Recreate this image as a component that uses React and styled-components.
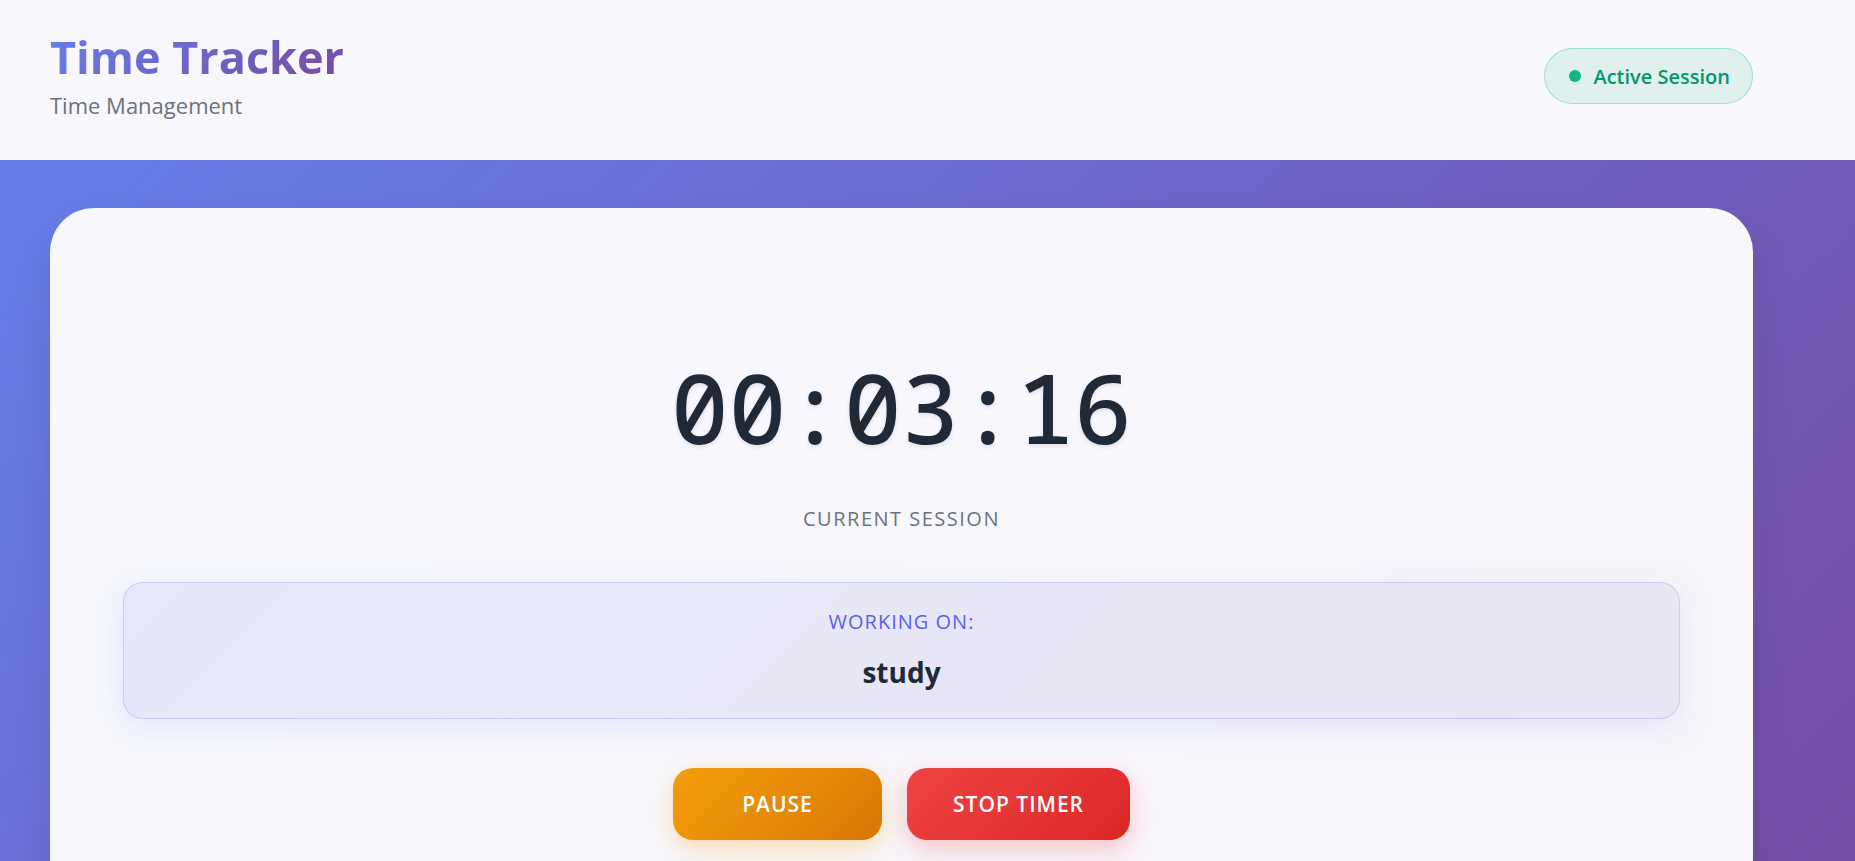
import React from "react";
import styled, { createGlobalStyle } from "styled-components";

const GlobalStyle = createGlobalStyle`
  * {
    box-sizing: border-box;
  }
  body {
    margin: 0;
    font-family: "Open Sans", "Noto Sans", sans-serif;
    background: #f7f7fc;
  }
`;

const Page = styled.div`
  min-height: 100vh;
  display: flex;
  flex-direction: column;
`;

const Header = styled.header`
  height: 160px;
  padding: 0 102px 8px 50px;
  display: flex;
  align-items: center;
  justify-content: space-between;
  background: #f7f7fc;
`;

const Brand = styled.div`
  display: flex;
  flex-direction: column;
`;

const Title = styled.h1`
  margin: 0;
  font-size: 45px;
  font-weight: 700;
  line-height: 1.1;
  background: linear-gradient(135deg, #667eea 0%, #764ba2 100%);
  -webkit-background-clip: text;
  background-clip: text;
  color: transparent;
  width: fit-content;
`;

const Subtitle = styled.p`
  margin: 8px 0 0;
  font-size: 22px;
  font-weight: 500;
  color: #6b7280;
`;

const Badge = styled.div`
  height: 56px;
  padding: 0 22px 0 24px;
  display: flex;
  align-items: center;
  gap: 12px;
  border-radius: 999px;
  background: rgba(16, 185, 129, 0.1);
  border: 1px solid rgba(16, 185, 129, 0.3);
  color: #059669;
  font-size: 20px;
  font-weight: 600;
`;

const Dot = styled.span`
  width: 12px;
  height: 12px;
  border-radius: 50%;
  background: #10b981;
`;

const Main = styled.main`
  flex: 1;
  padding: 48px 102px 48px 50px;
  background: linear-gradient(135deg, #667eea 0%, #764ba2 100%);
`;

const Card = styled.section`
  background: rgba(255, 255, 255, 0.95);
  border-radius: 44px;
  padding: 144px 73px 64px;
  display: flex;
  flex-direction: column;
  align-items: center;
  box-shadow: 0 20px 40px rgba(0, 0, 0, 0.1);
`;

const Timer = styled.div`
  font-family: "Noto Sans Mono", "DejaVu Sans Mono", monospace;
  font-feature-settings: "zero" 1;
  font-size: 96px;
  font-weight: 500;
  line-height: 1.15;
  color: #1f2937;
  text-shadow: 0 2px 4px rgba(0, 0, 0, 0.1);
  margin-bottom: 43px;
`;

const SessionLabel = styled.div`
  font-size: 20px;
  font-weight: 500;
  color: #6b7280;
  text-transform: uppercase;
  letter-spacing: 1.5px;
  margin-bottom: 50px;
`;

const TaskBox = styled.div`
  width: 100%;
  padding: 25px 24px 27px;
  border-radius: 20px;
  background: linear-gradient(135deg, rgba(102, 126, 234, 0.12) 0%, rgba(118, 75, 162, 0.1) 100%);
  border: 1px solid rgba(102, 126, 234, 0.25);
  box-shadow: 0 8px 32px rgba(102, 126, 234, 0.15);
  text-align: center;
  margin-bottom: 49px;
`;

const TaskLabel = styled.div`
  font-size: 20px;
  font-weight: 500;
  color: #5b5ff0;
  text-transform: uppercase;
  letter-spacing: 1px;
  margin-bottom: 18px;
`;

const TaskName = styled.div`
  font-size: 28px;
  font-weight: 700;
  color: #1f2937;
`;

const Controls = styled.div`
  display: flex;
  gap: 25px;
`;

const variants = {
  pause: {
    bg: "linear-gradient(135deg, #f59e0b 0%, #d97706 100%)",
    shadow: "rgba(245, 158, 11, 0.3)",
  },
  stop: {
    bg: "linear-gradient(135deg, #ef4444 0%, #dc2626 100%)",
    shadow: "rgba(239, 68, 68, 0.3)",
  },
};

const Button = styled.button`
  min-width: 209px;
  height: 72px;
  padding: 0 46px;
  border: none;
  border-radius: 20px;
  font-family: inherit;
  font-size: 21px;
  font-weight: 600;
  letter-spacing: 1px;
  text-transform: uppercase;
  color: white;
  cursor: pointer;
  background: ${(p) => variants[p.$variant].bg};
  box-shadow: 0 8px 24px ${(p) => variants[p.$variant].shadow};
`;

const App = () => {
  return (
    <>
      <GlobalStyle />
      <Page>
        <Header>
          <Brand>
            <Title>Time Tracker</Title>
            <Subtitle>Time Management</Subtitle>
          </Brand>
          <Badge>
            <Dot />
            Active Session
          </Badge>
        </Header>
        <Main>
          <Card>
            <Timer>00:03:16</Timer>
            <SessionLabel>Current Session</SessionLabel>
            <TaskBox>
              <TaskLabel>Working on:</TaskLabel>
              <TaskName>study</TaskName>
            </TaskBox>
            <Controls>
              <Button $variant="pause">Pause</Button>
              <Button $variant="stop">Stop Timer</Button>
            </Controls>
          </Card>
        </Main>
      </Page>
    </>
  );
};

export default App;
